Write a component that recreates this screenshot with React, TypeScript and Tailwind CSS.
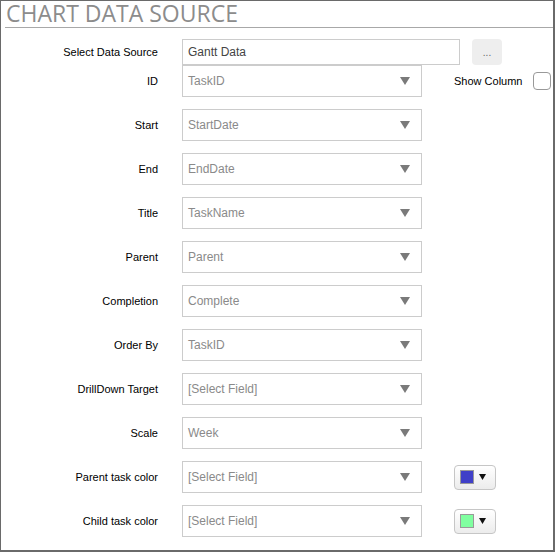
import React from 'react';

const FIELDS: { label: string; value: string }[] = [
  { label: 'Start', value: 'StartDate' },
  { label: 'End', value: 'EndDate' },
  { label: 'Title', value: 'TaskName' },
  { label: 'Parent', value: 'Parent' },
  { label: 'Completion', value: 'Complete' },
  { label: 'Order By', value: 'TaskID' },
  { label: 'DrillDown Target', value: '[Select Field]' },
  { label: 'Scale', value: 'Week' },
];

const COLORS = [
  { label: 'Parent task color', value: '[Select Field]', swatch: 'bg-[#4040c8]' },
  { label: 'Child task color', value: '[Select Field]', swatch: 'bg-[#80ffa0]' },
];

function Label({ children }: { children: React.ReactNode }) {
  return <div className="w-[157px] shrink-0 text-right text-[11px] text-black">{children}</div>;
}

function Dropdown({ value }: { value: string }) {
  return (
    <div className="ml-6 flex h-8 w-[240px] shrink-0 items-center justify-between border border-[#cccccc] bg-white pl-[5px] pr-[11px]">
      <span className="text-[12px] text-[#8a8a8a]">{value}</span>
      <svg width="10" height="8" viewBox="0 0 10 8">
        <polygon points="0,0 10,0 5,8" fill="#7a7a7a" />
      </svg>
    </div>
  );
}

function ColorButton({ swatch }: { swatch: string }) {
  return (
    <div className="ml-8 flex h-[25px] w-[42px] shrink-0 items-center gap-[5px] rounded-sm border border-[#c6c6c6] bg-gradient-to-b from-white to-[#ececec] pl-[5px]">
      <div className={`h-[14px] w-[14px] border border-[#999999] ${swatch}`} />
      <svg width="7" height="6" viewBox="0 0 7 6">
        <polygon points="0,0 7,0 3.5,6" fill="#111111" />
      </svg>
    </div>
  );
}

export default function App() {
  return (
    <div
      className="h-[552px] w-[555px] border-l border-t border-r-2 border-b-2 border-[#6a6a6a] bg-white"
      style={{ fontFamily: '"Liberation Sans", Arial, sans-serif' }}
    >
      <div className="ml-[4px] flex h-[27px] items-end border-b border-[#a8a8a8] pl-[1px]">
        <h1
          className="whitespace-nowrap text-[23px] leading-[27px] text-[#8c8c8c]"
          style={{ fontFamily: '"Open Sans", sans-serif' }}
        >
          CHART DATA SOURCE
        </h1>
      </div>

      <div className="mt-[11px] flex flex-col">
        <div className="flex h-[26px] items-center">
          <Label>Select Data Source</Label>
          <div className="ml-6 flex h-[26px] w-[278px] shrink-0 items-center border border-[#cccccc] pl-[5px] text-[12px] text-[#444444]">
            Gantt Data
          </div>
          <div className="ml-[12px] flex h-[26px] w-[30px] shrink-0 items-center justify-center rounded-sm bg-[#eeeeee] text-[10px] text-[#666666]">
            ...
          </div>
        </div>

        <div className="flex flex-col gap-3">
          <div className="flex items-center">
            <Label>ID</Label>
            <Dropdown value="TaskID" />
            <span className="ml-8 shrink-0 whitespace-nowrap text-[11px] text-black">Show Column</span>
            <div className="ml-[11px] h-[18px] w-[18px] shrink-0 rounded-sm border border-[#999999] bg-white" />
          </div>

          {FIELDS.map((f) => (
            <div key={f.label} className="flex items-center">
              <Label>{f.label}</Label>
              <Dropdown value={f.value} />
            </div>
          ))}

          {COLORS.map((c) => (
            <div key={c.label} className="flex items-center">
              <Label>{c.label}</Label>
              <Dropdown value={c.value} />
              <ColorButton swatch={c.swatch} />
            </div>
          ))}
        </div>
      </div>
    </div>
  );
}
